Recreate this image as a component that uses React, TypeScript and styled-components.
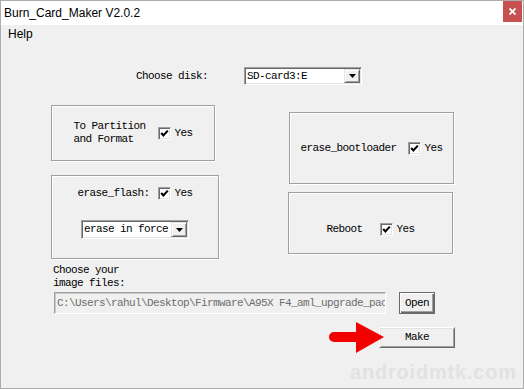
import React from 'react'
import styled, { createGlobalStyle } from 'styled-components'

const GlobalStyle = createGlobalStyle`
  html, body { margin: 0; padding: 0; background: #ffffff; }
  body { width: 524px; height: 389px; overflow: hidden; }
`

const Window = styled.div`
  box-sizing: border-box;
  width: 524px;
  height: 389px;
  border: 1px solid #acacac;
  background: #f0f0f0;
  display: flex;
  flex-direction: column;
  overflow: hidden;
  font-family: "Liberation Mono", "DejaVu Sans Mono", monospace;
  font-size: 11px;
  letter-spacing: -0.6px;
  line-height: 13px;
  color: #000;
`

const TitleBar = styled.div`
  height: 24px;
  flex: none;
  background: #fff;
  display: flex;
  justify-content: space-between;
  align-items: flex-start;
`

const Title = styled.span`
  font-family: "Liberation Sans", "Noto Sans", sans-serif;
  font-size: 12px;
  letter-spacing: 0;
  line-height: 14px;
  margin: 5px 0 0 3px;
`

const CloseBtn = styled.div`
  width: 19px;
  height: 21px;
  margin-right: 1px;
  background: #c75050;
  color: #fff;
  display: flex;
  align-items: center;
  justify-content: center;
`

const MenuBar = styled.div`
  height: 19px;
  flex: none;
  display: flex;
  align-items: center;
  padding-left: 7px;
  font-family: "Liberation Sans", "Noto Sans", sans-serif;
  font-size: 12px;
  letter-spacing: 0;
`

const DiskRow = styled.div`
  display: flex;
  align-items: center;
  height: 18px;
  margin: 23px 0 0 135px;
`

const FieldLabel = styled.span<{ $w?: number }>`
  width: ${(p) => (p.$w ? `${p.$w}px` : 'auto')};
  flex: none;
  white-space: pre;
`

const Combo = styled.div<{ $w: number; $h: number }>`
  box-sizing: border-box;
  width: ${(p) => p.$w}px;
  height: ${(p) => p.$h}px;
  background: #fff;
  border: 1px solid;
  border-color: #a0a0a0 #ffffff #ffffff #a0a0a0;
  box-shadow: inset 1px 1px 0 #696969, inset -1px -1px 0 #e3e3e3;
  display: flex;
  align-items: stretch;
  padding: 1px;
`

const ComboText = styled.span`
  flex: 1;
  padding-left: 1px;
  display: flex;
  align-items: center;
  white-space: nowrap;
  overflow: hidden;
`

const DropBtn = styled.div`
  box-sizing: border-box;
  width: 16px;
  flex: none;
  background: #f0f0f0;
  border: 1px solid;
  border-color: #e3e3e3 #696969 #696969 #e3e3e3;
  box-shadow: inset 1px 1px 0 #fff, inset -1px -1px 0 #a0a0a0;
  display: flex;
  align-items: center;
  justify-content: center;
`

const Columns = styled.div`
  display: flex;
  align-items: flex-start;
  margin: 20px 0 0 50px;
  gap: 69px;
`

const Column = styled.div<{ $top: number; $gap: number }>`
  display: flex;
  flex-direction: column;
  margin-top: ${(p) => p.$top}px;
  gap: ${(p) => p.$gap}px;
`

const Group = styled.div<{ $w: number; $h: number; $shift?: number; $padTop?: number; $stack?: boolean }>`
  box-sizing: border-box;
  width: ${(p) => p.$w}px;
  height: ${(p) => p.$h}px;
  margin-left: ${(p) => p.$shift ?? 0}px;
  border: 1px solid #a0a0a0;
  box-shadow: 1px 1px 0 #fff, inset 1px 1px 0 #fff;
  display: flex;
  flex-direction: ${(p) => (p.$stack ? 'column' : 'row')};
  align-items: center;
  justify-content: ${(p) => (p.$stack ? 'flex-start' : 'center')};
  padding-top: ${(p) => p.$padTop ?? 0}px;
  gap: 20px;
`

const OptionRow = styled.div<{ $gap: number }>`
  display: flex;
  align-items: center;
  & > span:first-child {
    margin-right: ${(p) => p.$gap}px;
  }
`

const Box = styled.span`
  box-sizing: border-box;
  width: 13px;
  height: 13px;
  flex: none;
  background: #fff;
  border: 1px solid;
  border-color: #a0a0a0 #ffffff #ffffff #a0a0a0;
  box-shadow: inset 1px 1px 0 #696969, inset -1px -1px 0 #e3e3e3;
  display: flex;
  align-items: center;
  justify-content: center;
  margin-right: 4px;
`

const FileLabel = styled.div`
  margin: 5px 0 0 52px;
`

const FileRow = styled.div`
  display: flex;
  align-items: center;
  margin: 2px 0 0 53px;
  gap: 13px;
`

const PathField = styled.div`
  box-sizing: border-box;
  width: 332px;
  height: 22px;
  background: #f0f0f0;
  border: 1px solid;
  border-color: #a0a0a0 #ffffff #ffffff #a0a0a0;
  box-shadow: inset 1px 1px 0 #c8c8c8;
  color: #6d6d6d;
  padding-left: 2px;
  display: flex;
  align-items: center;
  overflow: hidden;
`

const PathText = styled.span`
  white-space: nowrap;
  overflow: hidden;
  min-width: 0;
`

const Button = styled.div<{ $w: number; $h: number; $framed?: boolean }>`
  box-sizing: border-box;
  width: ${(p) => p.$w}px;
  height: ${(p) => p.$h}px;
  flex: none;
  background: #f0f0f0;
  border: 1px solid;
  border-color: ${(p) => (p.$framed ? '#6a6a6a' : '#ffffff #696969 #696969 #ffffff')};
  box-shadow: ${(p) =>
    p.$framed
      ? 'inset 1px 1px 0 #fff, inset -1px -1px 0 #696969, inset -2px -2px 0 #a0a0a0'
      : 'inset 1px 1px 0 #e3e3e3, inset -1px -1px 0 #a0a0a0'};
  display: flex;
  align-items: center;
  justify-content: center;
`

const MakeRow = styled.div`
  display: flex;
  align-items: center;
  height: 21px;
  margin: 13px 0 0 328px;
`

const Arrow = styled.svg`
  flex: none;
  margin-right: -5px;
  z-index: 1;
  position: relative;
`

const Watermark = styled.div`
  margin: 14px 0 0 349px;
  font-family: "Liberation Sans", "Noto Sans", sans-serif;
  font-size: 20px;
  font-weight: 700;
  line-height: 20px;
  letter-spacing: 0.8px;
  color: #e2e2e2;
`

const Check = () => (
  <svg width="9" height="9" viewBox="0 0 9 9">
    <path d="M1.2 4 L3.4 6.4 L7.8 1.6" fill="none" stroke="#000" strokeWidth="2.1" />
  </svg>
)

const Tri = () => (
  <svg width="7" height="4" viewBox="0 0 7 4">
    <path d="M0 0 H7 L3.5 4 Z" fill="#000" />
  </svg>
)

const CheckOpt = ({ label, gap }: { label: string; gap: number }) => (
  <OptionRow $gap={gap}>
    <FieldLabel>{label}</FieldLabel>
    <Box>
      <Check />
    </Box>
    <span>Yes</span>
  </OptionRow>
)

export default function App() {
  return (
    <>
      <GlobalStyle />
      <Window>
        <TitleBar>
          <Title>Burn_Card_Maker V2.0.2</Title>
          <CloseBtn>
            <svg width="7" height="7" viewBox="0 0 7 7">
              <path d="M0.5 0.5 L6.5 6.5 M6.5 0.5 L0.5 6.5" stroke="#fff" strokeWidth="1.8" />
            </svg>
          </CloseBtn>
        </TitleBar>
        <MenuBar>Help</MenuBar>

        <DiskRow>
          <FieldLabel $w={108}>Choose disk:</FieldLabel>
          <Combo $w={118} $h={18}>
            <ComboText>SD-card3:E</ComboText>
            <DropBtn>
              <Tri />
            </DropBtn>
          </Combo>
        </DiskRow>

        <Columns>
          <Column $top={0} $gap={14}>
            <Group $w={164} $h={56}>
              <CheckOpt label={'To Partition\nand Format'} gap={12} />
            </Group>
            <Group $w={168} $h={84} $stack $padTop={11}>
              <CheckOpt label="erase_flash:" gap={8} />
              <Combo $w={108} $h={19}>
                <ComboText>erase in force</ComboText>
                <DropBtn>
                  <Tri />
                </DropBtn>
              </Combo>
            </Group>
          </Column>
          <Column $top={7} $gap={8}>
            <Group $w={165} $h={72} $shift={1}>
              <CheckOpt label="erase_bootloader" gap={11} />
            </Group>
            <Group $w={165} $h={62} $padTop={12}>
              <CheckOpt label="Reboot" gap={17} />
            </Group>
          </Column>
        </Columns>

        <FileLabel>
          Choose your
          <br />
          image files:
        </FileLabel>
        <FileRow>
          <PathField>
            <PathText>C:\Users\rahul\Desktop\Firmware\A95X F4_aml_upgrade_pac</PathText>
          </PathField>
          <Button $w={36} $h={22} $framed>
            Open
          </Button>
        </FileRow>

        <MakeRow>
          <Arrow width="55" height="31" viewBox="0 0 55 31">
            <path d="M5 10 H27 V0 L55 15 L27 31 V20 H5 A5 5 0 0 1 5 10 Z" fill="#f20000" />
          </Arrow>
          <Button $w={76} $h={21}>
            Make
          </Button>
        </MakeRow>

        <Watermark>androidmtk.com</Watermark>
      </Window>
    </>
  )
}
